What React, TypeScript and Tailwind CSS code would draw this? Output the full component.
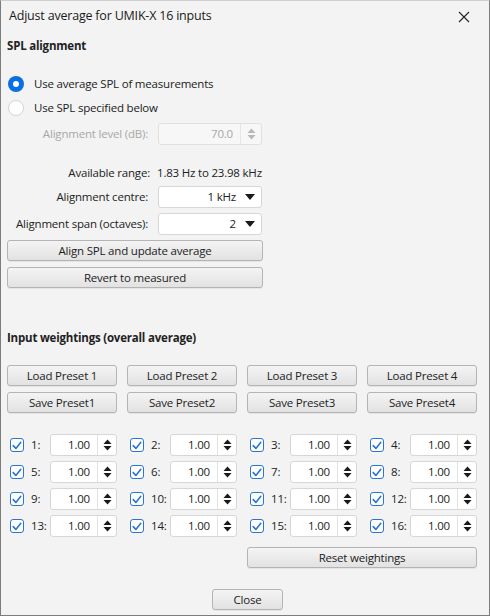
import React from "react";

const font = { fontFamily: '"Open Sans", "Noto Sans", sans-serif' };

function Btn({ children, className = "" }: { children: React.ReactNode; className?: string }) {
  return (
    <div
      className={`shrink-0 h-[21px] flex items-center justify-center rounded-[3px] border border-[#b4b4b4] bg-gradient-to-b from-[#f4f4f4] to-[#e2e2e2] text-[11.5px] tracking-[-0.2px] text-[#222] shadow-[0_1px_0_rgba(0,0,0,0.06)] ${className}`}
    >
      {children}
    </div>
  );
}

function SpinArrows({ disabled = false }: { disabled?: boolean }) {
  const c = disabled ? "#b8b8b8" : "#1a1a1a";
  return (
    <svg width="9" height="12" viewBox="0 0 9 12">
      <polygon points="4.5,0.5 8.5,5 0.5,5" fill={c} />
      <polygon points="0.5,7 8.5,7 4.5,11.5" fill={c} />
    </svg>
  );
}

function Spinner({ value, disabled = false, w = "w-[66px]", spinW = "w-[19px]" }: { value: string; disabled?: boolean; w?: string; spinW?: string }) {
  return (
    <div className={`shrink-0 h-[22px] ${w} flex rounded-[3px] border ${disabled ? "border-[#e0e0e0] bg-[#f7f7f7]" : "border-[#d6d6d6] bg-white"}`}>
      <div className={`flex-1 flex items-center justify-end pr-[7px] text-[11.5px] tracking-[-0.2px] ${disabled ? "text-[#a8a8a8]" : "text-[#222]"}`}>{value}</div>
      <div className={`${spinW} flex items-center justify-center border-l ${disabled ? "border-[#e6e6e6]" : "border-[#e2e2e2]"}`}>
        <SpinArrows disabled={disabled} />
      </div>
    </div>
  );
}

function Combo({ value }: { value: string }) {
  return (
    <div className="shrink-0 h-[22px] w-[104px] flex items-center justify-end rounded-[3px] border border-[#d6d6d6] bg-white pr-[6px] text-[11.5px] tracking-[-0.2px] text-[#222]">
      <span className="mr-[9px]">{value}</span>
      <svg width="10" height="6" viewBox="0 0 10 6">
        <polygon points="0,0 10,0 5,6" fill="#1a1a1a" />
      </svg>
    </div>
  );
}

function Check() {
  return (
    <div className="w-[14px] h-[14px] rounded-[3px] border-[1.5px] border-[#2a74d4] bg-white flex items-center justify-center">
      <svg width="10" height="9" viewBox="0 0 10 9">
        <polyline points="1.2,4.6 3.9,7.4 8.8,1.3" fill="none" stroke="#2a74d4" strokeWidth="1.6" strokeLinecap="round" strokeLinejoin="round" />
      </svg>
    </div>
  );
}

const t = "text-[11.5px] tracking-[-0.2px] whitespace-nowrap";

export default function App() {
  const cols = [0, 1, 2, 3];
  const rows = [0, 1, 2, 3];
  return (
    <div style={font} className="w-[490px] h-[616px] overflow-hidden bg-[#f3f3f3] border-x border-b border-[#7c7c7c] border-t border-t-[#cfcfcf] flex flex-col text-[#222]">
      {/* Title bar */}
      <div className="shrink-0 h-[31px] flex items-center justify-between pl-[8px] pr-[19px]">
        <span className="text-[12.5px] tracking-[-0.2px] text-[#1a1a1a] whitespace-nowrap">Adjust average for UMIK-X 16 inputs</span>
        <svg width="12" height="12" viewBox="0 0 12 12">
          <path d="M1 1 L11 11 M11 1 L1 11" stroke="#222" strokeWidth="1.1" />
        </svg>
      </div>

      <div className="pl-[6px] flex flex-col shrink-0">
        <div className={`mt-[6px] h-[16px] flex items-center font-bold ${t}`}>SPL alignment</div>

        {/* Radios */}
        <div className="mt-[20px] h-[20px] flex items-center pl-[1px]">
          <div className="w-[16px] h-[16px] rounded-full bg-[#0a6fe0] flex items-center justify-center">
            <div className="w-[6px] h-[6px] rounded-full bg-white" />
          </div>
          <span className={`ml-[10px] ${t}`}>Use average SPL of measurements</span>
        </div>
        <div className="mt-[4px] h-[20px] flex items-center pl-[1px]">
          <div className="w-[16px] h-[16px] rounded-full bg-white border border-[#d4d4d4]" />
          <span className={`ml-[10px] ${t}`}>Use SPL specified below</span>
        </div>

        {/* Alignment level */}
        <div className="mt-[5px] flex items-center">
          <div className={`w-[141px] text-right text-[#a8a8a8] ${t}`}>Alignment level (dB):</div>
          <div className="ml-[10px]">
            <Spinner value="70.0" disabled w="w-[104px]" spinW="w-[21px]" />
          </div>
        </div>

        {/* Available range */}
        <div className="mt-[18px] h-[20px] flex items-center">
          <div className={`w-[143px] text-right ${t}`}>Available range:</div>
          <div className={`ml-[7px] ${t}`}>1.83 Hz to 23.98 kHz</div>
        </div>

        <div className="mt-[3px] flex items-center">
          <div className={`w-[141px] text-right ${t}`}>Alignment centre:</div>
          <div className="ml-[10px]"><Combo value="1 kHz" /></div>
        </div>
        <div className="mt-[5px] flex items-center">
          <div className={`w-[141px] text-right ${t}`}>Alignment span (octaves):</div>
          <div className="ml-[10px]"><Combo value="2" /></div>
        </div>

        <Btn className="mt-[5px] w-[256px]">Align SPL and update average</Btn>
        <Btn className="mt-[6px] w-[256px]">Revert to measured</Btn>

        <div className={`mt-[42px] h-[16px] flex items-center font-bold ${t}`}>Input weightings (overall average)</div>

        <div className="mt-[19px] grid grid-cols-[110px_110px_110px_110px] gap-x-[10px] gap-y-[6px]">
          {cols.map((c) => (
            <Btn key={"l" + c}>Load Preset {c + 1}</Btn>
          ))}
          {cols.map((c) => (
            <Btn key={"s" + c}>Save Preset{c + 1}</Btn>
          ))}
        </div>

        <div className="mt-[21px] grid grid-cols-[110px_110px_110px_110px] gap-x-[10px] gap-y-[5px]">
          {rows.map((r) =>
            cols.map((c) => {
              const n = r * 4 + c + 1;
              return (
                <div key={n} className="h-[22px] flex items-center">
                  <div className="ml-[3px] shrink-0"><Check /></div>
                  <span className={`ml-[7px] w-[19px] shrink-0 ${t}`}>{n}:</span>
                  <Spinner value="1.00" w="w-[67px]" />
                </div>
              );
            })
          )}
        </div>

        <div className="mt-[10px] flex">
          <Btn className="ml-[240px] w-[230px]">Reset weightings</Btn>
        </div>

        <div className="mt-[21px] flex">
          <Btn className="ml-[205px] w-[71px]">Close</Btn>
        </div>
      </div>
    </div>
  );
}
